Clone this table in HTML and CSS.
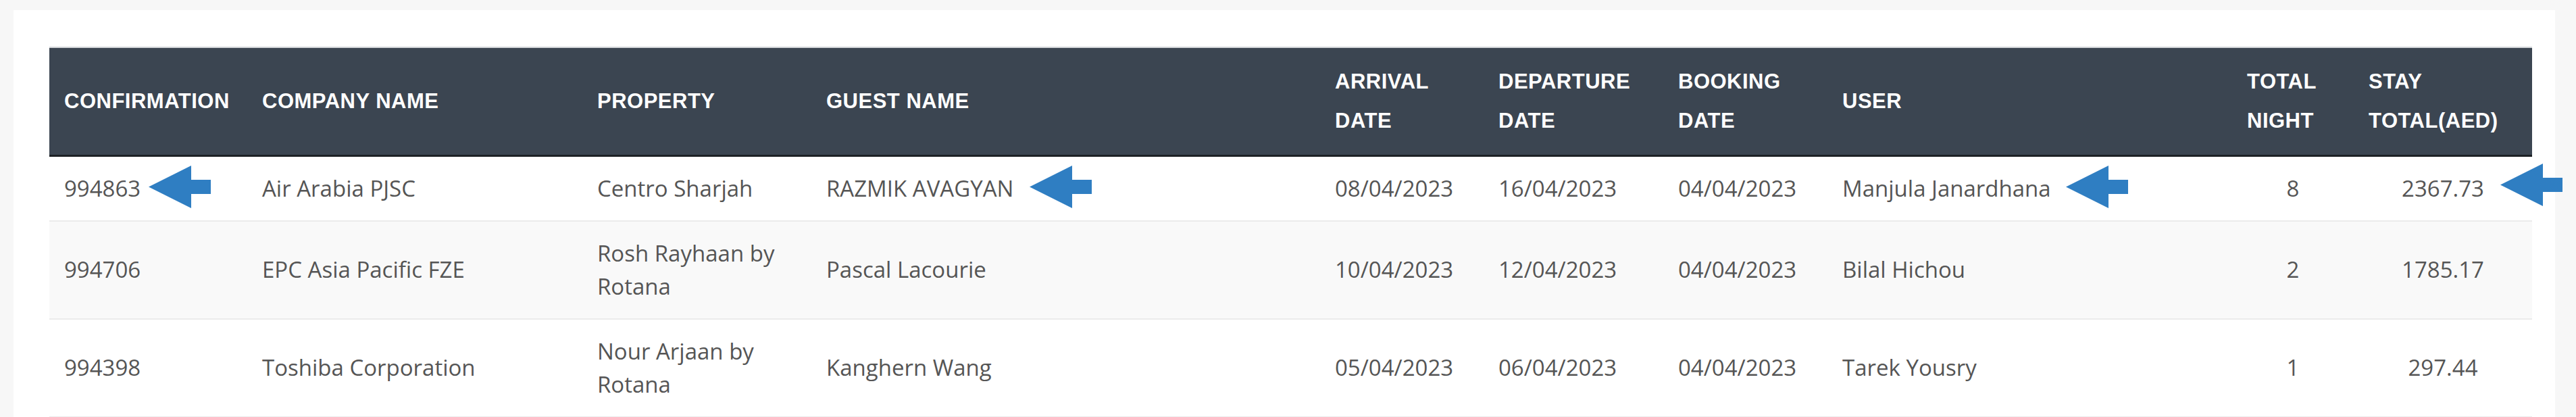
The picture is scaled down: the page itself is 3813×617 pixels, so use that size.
FILE: index.html
```html
<!DOCTYPE html>
<html lang="en">
<head>
<meta charset="utf-8">
<title>Bookings</title>
<link rel="stylesheet" href="styles.css">
</head>
<body>
<div class="card">
  <table class="bookings">
    <colgroup>
      <col class="w-conf"><col class="w-company"><col class="w-property"><col class="w-guest">
      <col class="w-arrival"><col class="w-departure"><col class="w-booking"><col class="w-user">
      <col class="w-nights"><col class="w-total">
    </colgroup>
    <thead>
      <tr>
        <th>CONFIRMATION</th>
        <th>COMPANY NAME</th>
        <th>PROPERTY</th>
        <th>GUEST NAME</th>
        <th>ARRIVAL<br>DATE</th>
        <th>DEPARTURE<br>DATE</th>
        <th>BOOKING<br>DATE</th>
        <th>USER</th>
        <th>TOTAL<br>NIGHT</th>
        <th>STAY<br>TOTAL(AED)</th>
      </tr>
    </thead>
    <tbody>
      <tr>
        <td>994863</td>
        <td>Air Arabia PJSC</td>
        <td>Centro Sharjah</td>
        <td>RAZMIK AVAGYAN</td>
        <td>08/04/2023</td>
        <td>16/04/2023</td>
        <td>04/04/2023</td>
        <td>Manjula Janardhana</td>
        <td class="num">8</td>
        <td class="num">2367.73</td>
      </tr>
      <tr>
        <td>994706</td>
        <td>EPC Asia Pacific FZE</td>
        <td>Rosh Rayhaan by Rotana</td>
        <td>Pascal Lacourie</td>
        <td>10/04/2023</td>
        <td>12/04/2023</td>
        <td>04/04/2023</td>
        <td>Bilal Hichou</td>
        <td class="num">2</td>
        <td class="num">1785.17</td>
      </tr>
      <tr>
        <td>994398</td>
        <td>Toshiba Corporation</td>
        <td>Nour Arjaan by Rotana</td>
        <td>Kanghern Wang</td>
        <td>05/04/2023</td>
        <td>06/04/2023</td>
        <td>04/04/2023</td>
        <td>Tarek Yousry</td>
        <td class="num">1</td>
        <td class="num">297.44</td>
      </tr>
    </tbody>
  </table>

  <svg class="arrow arrow-1" viewBox="0 0 92 63" width="92" height="63"><polygon points="0,31.5 63,0 63,21 92,21 92,42 63,42 63,63"/></svg>
  <svg class="arrow arrow-2" viewBox="0 0 92 63" width="92" height="63"><polygon points="0,31.5 63,0 63,21 92,21 92,42 63,42 63,63"/></svg>
  <svg class="arrow arrow-3" viewBox="0 0 92 63" width="92" height="63"><polygon points="0,31.5 63,0 63,21 92,21 92,42 63,42 63,63"/></svg>
  <svg class="arrow arrow-4" viewBox="0 0 92 63" width="92" height="63"><polygon points="0,31.5 63,0 63,21 92,21 92,42 63,42 63,63"/></svg>
</div>
</body>
</html>
```

FILE: styles.css
```css
html, body {
  margin: 0;
  padding: 0;
}

body {
  background: #f7f7f7;
  font-family: "Open Sans", "Noto Sans", sans-serif;
  overflow: hidden;
}

.card {
  position: relative;
  background: #ffffff;
  margin: 15px 31px 0 20px;
  padding: 54px 34px 2px 53px;
}

.bookings {
  width: 100%;
  table-layout: fixed;
  border-collapse: collapse;
}

.w-conf { width: 293px; }
.w-company { width: 496px; }
.w-property { width: 339px; }
.w-guest { width: 753px; }
.w-arrival { width: 242px; }
.w-departure { width: 266px; }
.w-booking { width: 243px; }
.w-user { width: 599px; }
.w-nights { width: 180px; }
.w-total { width: 264px; }

.bookings th {
  background: #3b4551;
  color: #ffffff;
  font-family: "Liberation Sans", Arial, sans-serif;
  font-weight: 700;
  font-size: 31px;
  letter-spacing: 0.5px;
  line-height: 58px;
  text-align: left;
  vertical-align: middle;
  padding: 21px 22px;
  border-top: 2px solid #d3d6d9;
  border-bottom: 3px solid #1d2125;
  white-space: nowrap;
}

.bookings td {
  color: #555555;
  font-size: 33px;
  line-height: 49.5px;
  vertical-align: middle;
  padding: 22px 22px;
  border-top: 2px solid #ebebeb;
}

.bookings tbody tr:nth-child(even) td {
  background: #f9f9f9;
}

.bookings tbody tr:last-child td {
  border-bottom: 2px solid #ebebeb;
}

.bookings td.num {
  text-align: center;
}

.arrow {
  position: absolute;
  display: block;
  fill: #2f7ec2;
}

.arrow-1 { left: 200px; top: 230px; }
.arrow-2 { left: 1504px; top: 230px; }
.arrow-3 { left: 3038px; top: 230px; }
.arrow-4 { left: 3681px; top: 227px; }
```
